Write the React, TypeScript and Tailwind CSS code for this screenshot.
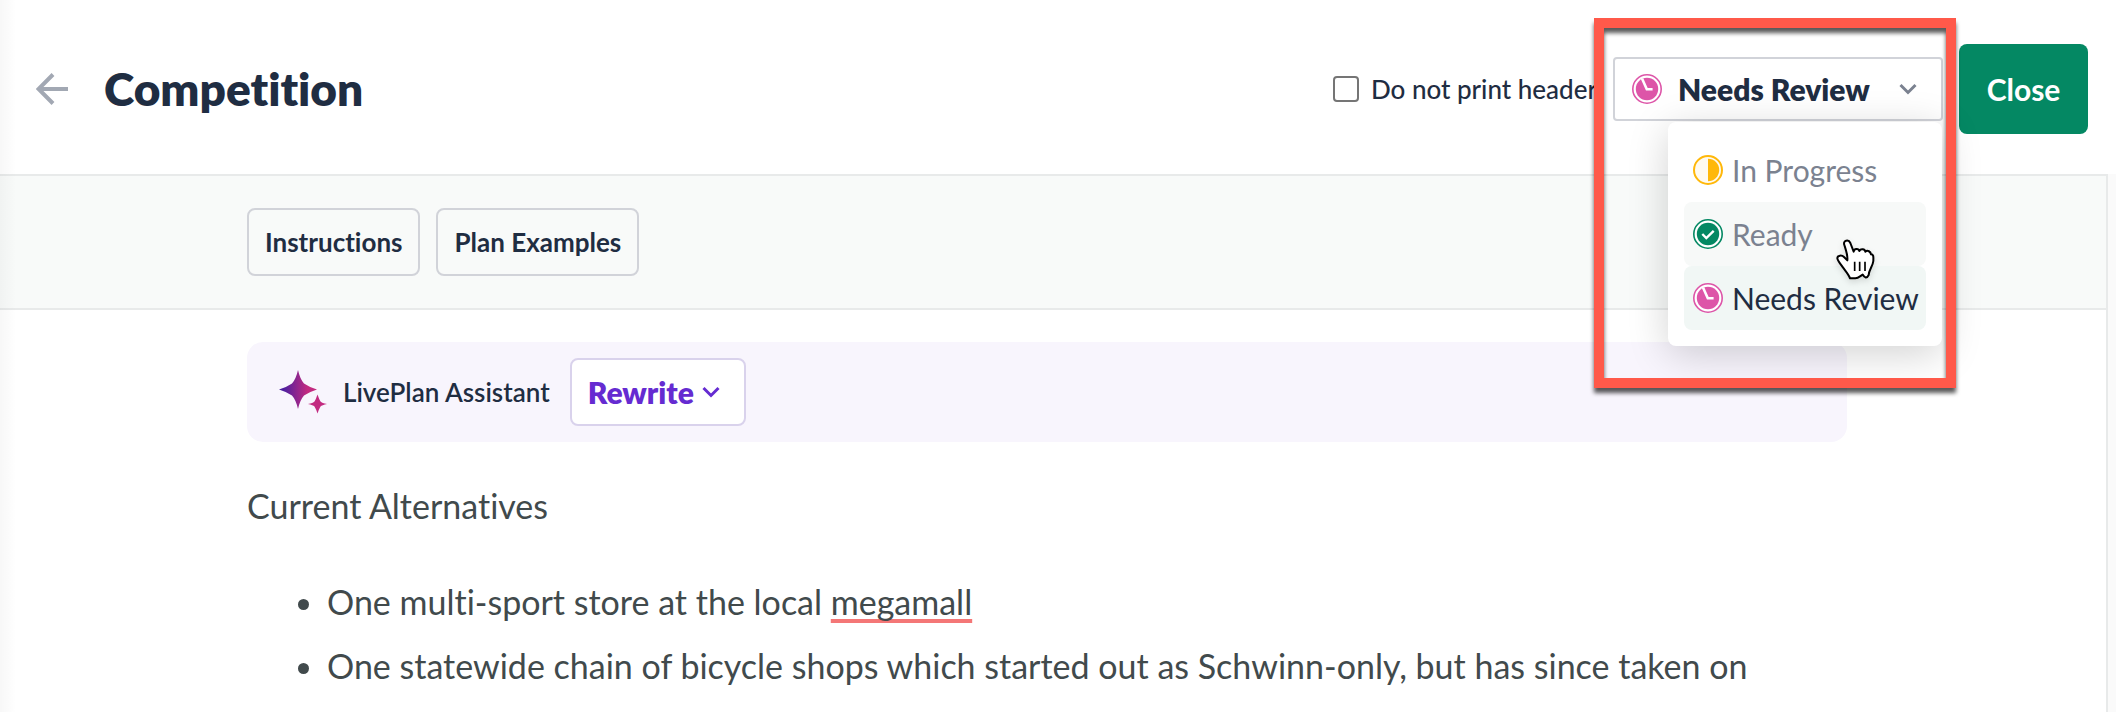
import React, { useState } from 'react';

type Status = 'In Progress' | 'Ready' | 'Needs Review';

const STATUSES: Status[] = ['In Progress', 'Ready', 'Needs Review'];

const StatusIcon: React.FC<{ status: Status }> = ({ status }) => {
  if (status === 'In Progress') {
    return (
      <svg width="30" height="30" viewBox="0 0 30 30" className="shrink-0" aria-hidden="true">
        <circle cx="15" cy="15" r="14" fill="#fffaf0" stroke="#ffb80a" strokeWidth="2" />
        <path d="M15 3.8a11.2 11.2 0 0 1 0 22.4z" fill="#ffb80a" />
      </svg>
    );
  }
  if (status === 'Ready') {
    return (
      <svg width="30" height="30" viewBox="0 0 30 30" className="shrink-0" aria-hidden="true">
        <circle cx="15" cy="15" r="14.2" fill="#fff" stroke="#048863" strokeWidth="1.6" />
        <circle cx="15" cy="15" r="11.2" fill="#048863" />
        <path d="M9.3 15l4 4 7.4-7.2" fill="none" stroke="#fff" strokeWidth="2.4" />
      </svg>
    );
  }
  return (
    <svg width="30" height="30" viewBox="0 0 30 30" className="shrink-0" aria-hidden="true">
      <circle cx="15" cy="15" r="14.2" fill="#fff" stroke="#dd55a8" strokeWidth="1.6" />
      <circle cx="15" cy="15" r="11.2" fill="#dd55a8" />
      <path d="M10 4.5l4.8 10.7h5.8" fill="none" stroke="#fff" strokeWidth="2.6" />
    </svg>
  );
};

const Chevron: React.FC<{ className: string; strokeWidth: number }> = ({ className, strokeWidth }) => (
  <svg width="18" height="12" viewBox="0 0 18 12" fill="none" stroke="currentColor" strokeWidth={strokeWidth} className={className} aria-hidden="true">
    <path d="M1.5 2L9 9.5 16.5 2" />
  </svg>
);

const Sparkles = () => (
  <svg width="48" height="44" viewBox="0 0 48 44" aria-hidden="true">
    <defs>
      <linearGradient id="spark" x1="0" y1="0" x2="1" y2="0">
        <stop offset="0.1" stopColor="#4a1fa0" />
        <stop offset="0.75" stopColor="#c22a80" />
      </linearGradient>
    </defs>
    <path d="M19 0Q21 9 25 13.5 30 17 38 19.5 30 22 25 25.5 21 30 19 39 17 30 13 25.5 8 22 0 19.5 8 17 13 13.5 17 9 19 0z" fill="url(#spark)" />
    <path d="M38.5 24.500Q40 29 41.5 31.500 43 33 48 34 43 35 41.500 36.500 40 39 38.500 43.500 37 39 35.500 36.500 34 35 29 34 34 33 35.500 31.500 37 29 38.500 24.500z" fill="#c22a80" />
  </svg>
);

const HandCursor = () => (
  <svg width="40" height="42" viewBox="0 0 120 126" className="pointer-events-none absolute left-[168px] top-[117px] drop-shadow-md" aria-hidden="true">
    <path
      d="M25 18C20 4 38 0 43 12L53 38C54 28 68 28 70 36 74 28 87 30 88 38 95 32 104 38 105 46 114 46 112 56 112 66 111 80 98 94 98 108 92 120 86 116 80 107 72 112 66 118 58 118H42C38 106 28 96 19 83 12 73 4 64 4 58 4 48 18 48 24 54L34 64C36 50 30 34 25 18z"
      fill="#fff"
      stroke="#000"
      strokeWidth="6"
      strokeLinejoin="round"
    />
    <path d="M56 68v28M71 68v28M87 68v28" stroke="#000" strokeWidth="5" />
  </svg>
);

export default function App() {
  const [status, setStatus] = useState<Status>('Needs Review');

  return (
    <div className="relative flex min-h-screen flex-col overflow-hidden bg-[#fafafa] font-[Lato,sans-serif] text-[#1f2d42] [font-variant-ligatures:none]">
      <header className="flex h-[174px] items-center bg-white pl-9 pr-7 pt-1">
        <div className="flex flex-1 items-center">
          <button type="button" aria-label="Back" className="mr-9 text-[#a2a8b3]">
            <svg width="32" height="32" viewBox="0 0 32 32" fill="none" stroke="currentColor" strokeWidth="4" aria-hidden="true">
              <path d="M32 16H3M17 1.500L2.500 16 17 30.500" />
            </svg>
          </button>
          <h1 className="text-[46px] font-extrabold leading-[56px]">Competition</h1>
        </div>

        <label className="mr-4 flex items-center gap-3 text-[26px] font-medium">
          <input type="checkbox" className="size-[26px] appearance-none rounded border-2 border-[#757575] bg-white" />
          Do not print header
        </label>

        {/* Status picker with its open menu */}
        <div className="relative z-10 mr-4 w-[330px]">
          <div className="flex h-16 items-center rounded border-2 border-[#d1d3d9] bg-white pl-[17px] pr-6">
            <StatusIcon status={status} />
            <select
              aria-label="Status"
              value={status}
              onChange={(e) => setStatus(e.target.value as Status)}
              className="ml-4 h-full flex-1 appearance-none bg-transparent text-[30px] font-extrabold"
            >
              {STATUSES.map((s) => (
                <option key={s}>{s}</option>
              ))}
            </select>
            <Chevron className="text-[#7b8290]" strokeWidth={3} />
          </div>

          <div className="absolute right-px top-[65px] w-[274px] rounded-lg bg-white p-4 shadow-[0_8px_40px_rgba(0,0,0,0.18)]">
            {STATUSES.map((s) => (
              <button
                key={s}
                type="button"
                onClick={() => setStatus(s)}
                className={`flex h-16 w-full items-center gap-[9px] whitespace-nowrap rounded-lg pl-[9px] text-[30px] ${
                  s === status ? 'bg-[#f1f7f5]' : s === 'Ready' ? 'bg-[#f7f9f8] text-[#7b8290]' : 'text-[#7b8290]'
                }`}
              >
                <StatusIcon status={s} />
                {s}
              </button>
            ))}
            <HandCursor />
          </div>

          {/* Callout frame */}
          <div className="pointer-events-none absolute -left-[19px] -right-[13px] -top-[39px] h-[370px] border-10 border-[#ff594a] drop-shadow-[0_5px_2px_rgba(0,0,0,0.65)]" />
        </div>

        <button type="button" className="h-[90px] w-[129px] rounded-lg bg-[#048863] text-[30px] font-bold text-white">
          Close
        </button>
      </header>

      <main className="mr-2 flex-1 border-r-2 border-t-2 border-[#e8eaea] bg-white">
        <div className="border-b-2 border-[#e8eaea] bg-[#f8faf9] py-8 pr-3">
          <div className="mx-auto flex max-w-[1600px] gap-4 text-[26px] font-bold">
            <button type="button" className="h-[68px] rounded-lg border-2 border-[#d1d3d9] px-4">
              Instructions
            </button>
            <button type="button" className="h-[68px] rounded-lg border-2 border-[#d1d3d9] px-4">
              Plan Examples
            </button>
          </div>
        </div>

        <div className="pr-3 pt-8">
          <div className="mx-auto max-w-[1600px]">
            <section className="flex h-[100px] items-center rounded-2xl bg-[#f8f5fd] pl-8">
              <Sparkles />
              <span className="ml-4 mr-5 text-[26px] font-semibold">LivePlan Assistant</span>
              <button
                type="button"
                className="flex h-[68px] items-center gap-2 rounded-lg border-2 border-[#d9d2ec] bg-white pl-4 pr-6 text-[30px] font-extrabold text-[#652bd1]"
              >
                Rewrite
                <Chevron className="text-[#652bd1]" strokeWidth={3} />
              </button>
            </section>

            <article className="text-[34px] leading-[64px] text-[#414a4c]">
              <p className="mt-8">Current Alternatives</p>
              <ul className="mt-8 list-disc pl-20">
                <li>
                  One multi-sport store at the local{' '}
                  <span className="underline decoration-[#f47777] decoration-4 underline-offset-4 [text-decoration-skip-ink:none]">megamall</span>
                </li>
                <li>One statewide chain of bicycle shops which started out as Schwinn-only, but has since taken on</li>
              </ul>
            </article>
          </div>
        </div>
      </main>

      <div className="pointer-events-none absolute inset-y-0 left-0 w-4 bg-linear-to-r from-black/3 to-transparent" />
    </div>
  );
}
